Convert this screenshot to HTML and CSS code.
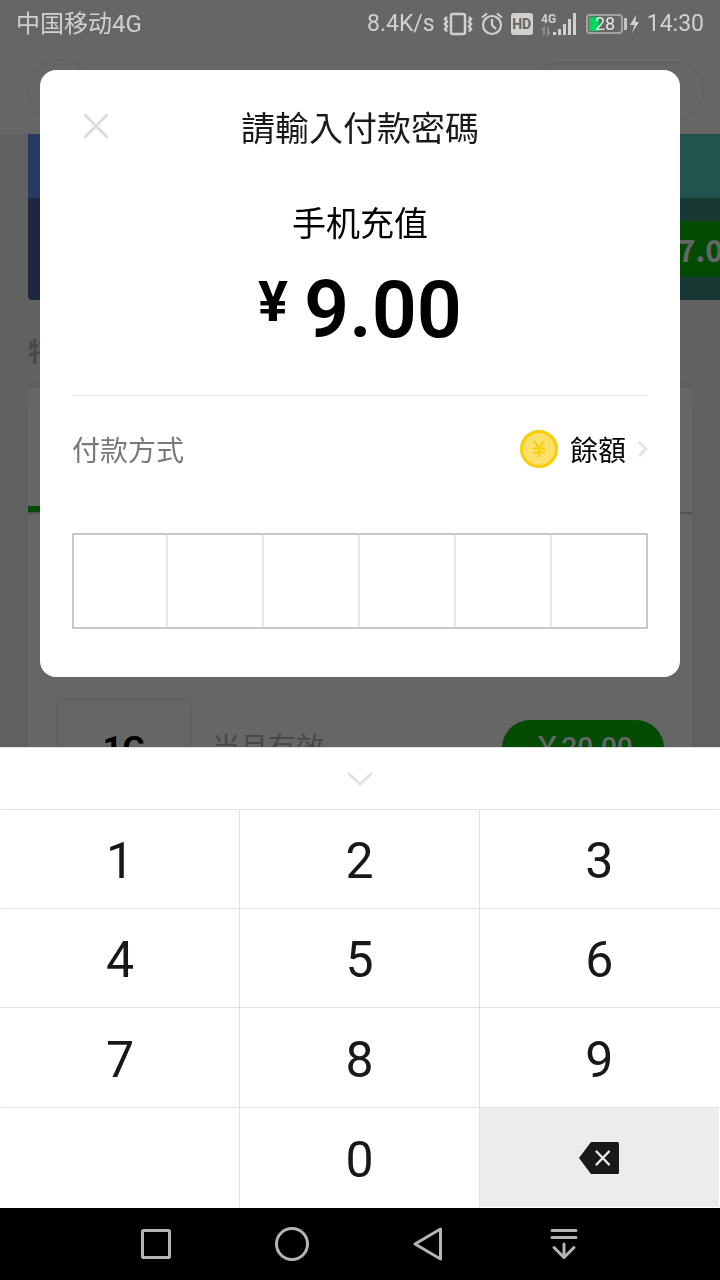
FILE: index.html
```html
<!DOCTYPE html>
<html lang="zh-Hant">
<head>
  <meta charset="UTF-8">
  <title>請輸入付款密碼</title>
  <meta name="viewport" content="width=device-width, initial-scale=1.0">
  <link rel="stylesheet" href="styles.css">
</head>
<body>
  <!-- Shop page under the mask -->
  <div class="shop">
    <div class="shop-header">
      <div class="shop-avatar"></div>
      <div class="shop-menu"></div>
    </div>
    <div class="shop-banners">
      <div class="banner banner-blue"></div>
      <div class="banner banner-teal">
        <div class="banner-price">¥7.00</div>
      </div>
    </div>
    <h2 class="shop-title">特價</h2>
    <div class="shop-card">
      <div class="shop-tabs"><div class="shop-tab"></div></div>
      <div class="shop-item">
        <div class="shop-size">1G</div>
        <div class="shop-desc">当月有效</div>
        <div class="shop-buy">￥20.00</div>
      </div>
    </div>
  </div>

  <div class="mask">
    <!-- Status bar -->
    <div class="status">
      <span class="status-carrier">中国移动4G</span>
      <span>8.4K/s</span>
      <svg width="30" height="24" viewBox="0 0 30 24" fill="none" stroke="#d0d0d0">
        <rect x="8" y="2" width="14" height="20" rx="2" stroke-width="2.5"/>
        <path d="M4 5 2 7 4 9.500 2 12 4 14.500 2 17 4 19.500M26 5 28 7 26 9.500 28 12 26 14.500 28 17 26 19.500" stroke-width="2.5"/>
      </svg>
      <svg width="22" height="24" viewBox="0 0 22 24" fill="none" stroke="#d0d0d0" stroke-width="2.2">
        <circle cx="11" cy="13" r="9"/>
        <path d="M11 7V13L15 17M1 5.500 6 1.500M21 5.500 16 1.500"/>
      </svg>
      <span class="status-hd">HD</span>
      <svg width="36" height="24" viewBox="0 0 36 24" fill="#d0d0d0">
        <text x="0" y="11" class="status-net">4G</text>
        <path d="M12 20h3v3h-3zM17 17h3v6h-3zM22 12h3v11h-3zM27 7h3v16h-3zM32 1h3v22h-3z"/>
        <path d="M3 23V16L1 18M7 15V22L9 20" fill="none" stroke="#8c8c8c" stroke-width="2"/>
      </svg>
      <svg width="54" height="24" viewBox="0 0 54 24">
        <rect x="2" y="3" width="35" height="18" rx="3" fill="none" stroke="#a4a4a4" stroke-width="2"/>
        <path d="M4 5H14V19H4Z" fill="#00d75a"/>
        <path d="M39 6h3v12h-3z" fill="#c4c4c4"/>
        <text x="20" y="18" text-anchor="middle" class="status-level">28</text>
        <path d="M51 3 45 13H49.500L47 21 54 10H50.500Z" fill="#d0d0d0"/>
      </svg>
      <span>14:30</span>
    </div>

    <!-- Payment dialog -->
    <form class="pay">
      <div class="pay-header">
        <button type="button" class="pay-close" aria-label="關閉">
          <svg width="26" height="26" viewBox="0 0 26 26" fill="none" stroke="#dcdcdc" stroke-width="3"><path d="M1.500 1.500 24.500 24.500M24.500 1.500 1.500 24.500"/></svg>
        </button>
        <h1 class="pay-title">請輸入付款密碼</h1>
      </div>
      <div class="pay-name">手机充值</div>
      <div class="pay-amount"><span class="pay-sign">¥</span>9.00</div>
      <div class="pay-method">
        <span class="pay-method-label">付款方式</span>
        <button type="button" class="pay-method-btn">
          <svg width="38" height="38" viewBox="0 0 38 38">
            <circle cx="19" cy="19" r="17.500" fill="#fbe06b" stroke="#facd05" stroke-width="3"/>
            <path d="M14 11 19 18.500 24 11M19 18V27M13 18.500H25M13 22.500H25" fill="none" stroke="#facd05" stroke-width="2"/>
          </svg>
          <span>餘額</span>
          <svg width="10" height="16" viewBox="0 0 10 16" fill="none" stroke="#e4e4e4" stroke-width="3"><path d="M1 1 8 8 1 15"/></svg>
        </button>
      </div>
      <div class="pay-code">
        <input type="password" maxlength="1" inputmode="none" aria-label="密碼第 1 位">
        <input type="password" maxlength="1" inputmode="none" aria-label="密碼第 2 位">
        <input type="password" maxlength="1" inputmode="none" aria-label="密碼第 3 位">
        <input type="password" maxlength="1" inputmode="none" aria-label="密碼第 4 位">
        <input type="password" maxlength="1" inputmode="none" aria-label="密碼第 5 位">
        <input type="password" maxlength="1" inputmode="none" aria-label="密碼第 6 位">
      </div>
    </form>

    <!-- Number pad -->
    <div class="pad">
      <button type="button" class="pad-hide" aria-label="收起鍵盤">
        <svg width="28" height="16" viewBox="0 0 28 16" fill="none" stroke="#e2e2e2" stroke-width="3"><path d="M2 2 14 13 26 2"/></svg>
      </button>
      <div class="pad-keys">
        <button type="button" class="key">1</button>
        <button type="button" class="key">2</button>
        <button type="button" class="key">3</button>
        <button type="button" class="key">4</button>
        <button type="button" class="key">5</button>
        <button type="button" class="key">6</button>
        <button type="button" class="key">7</button>
        <button type="button" class="key">8</button>
        <button type="button" class="key">9</button>
        <div class="key"></div>
        <button type="button" class="key">0</button>
        <button type="button" class="key key-delete" aria-label="刪除">
          <svg width="40" height="32" viewBox="0 0 40 32"><path d="M12 0H38.500Q40 0 40 1.500V30.500Q40 32 38.500 32H12L0 16Z" fill="#181818"/><path d="M17.500 9.500 30 22.500M30 9.500 17.500 22.500" stroke="#ececec" stroke-width="2.400" stroke-linecap="round"/></svg>
        </button>
      </div>
    </div>

    <!-- System navigation -->
    <nav class="nav">
      <button type="button" aria-label="最近">
        <svg width="32" height="34" viewBox="0 0 32 34"><rect x="2.500" y="3.500" width="27" height="27" rx="1"/></svg>
      </button>
      <button type="button" aria-label="主頁">
        <svg width="34" height="34" viewBox="0 0 34 34"><circle cx="17" cy="17" r="15.500"/></svg>
      </button>
      <button type="button" aria-label="返回">
        <svg width="32" height="34" viewBox="0 0 32 34"><path d="M28.500 2V32L3 17Z"/></svg>
      </button>
      <button type="button" aria-label="通知">
        <svg width="32" height="34" viewBox="0 0 32 34"><path d="M4 3.500H28M4 10.500H28M16 17V30M6 20.500 16 30.500 26 20.500"/></svg>
      </button>
    </nav>
  </div>
</body>
</html>
```

FILE: styles.css
```css
* { box-sizing: border-box; }
body {
  margin: 0;
  background: #f2f2f2;
  font-family: Roboto, "Noto Sans CJK SC", sans-serif;
  color: #000;
}
button {
  padding: 0;
  border: 0;
  background: none;
  font: inherit;
  color: inherit;
  cursor: pointer;
}
svg { display: block; flex: none; }
h1, h2 { margin: 0; }

/* shop page */
.shop {
  height: 100vh;
  overflow: hidden;
}
.shop-header {
  display: flex;
  align-items: center;
  justify-content: space-between;
  height: 134px;
  padding: 48px 16px 0 28px;
  background: #fff;
}
.shop-avatar, .shop-menu {
  width: 64px;
  height: 64px;
  border: 1px solid #ebebeb;
  border-radius: 32px;
}
.shop-menu {
  width: 174px;
  height: 58px;
}
.shop-banners {
  display: flex;
  gap: 16px;
  height: 166px;
  padding-left: 28px;
}
.banner {
  flex: 1;
  border-radius: 0 0 4px 4px;
}
.banner-blue { background: linear-gradient(#6491f7 64px, #4664a8 64px); }
.banner-teal {
  display: flex;
  justify-content: flex-end;
  padding-top: 87px;
  border-radius: 0;
  background: linear-gradient(#55cfbe 64px, #3c8c80 64px);
}
.banner-price {
  width: 80px;
  height: 56px;
  padding-left: 20px;
  overflow: hidden;
  background: #09bb07;
  color: #fff;
  font-family: "Noto Sans CJK SC", sans-serif;
  font-size: 30px;
  font-weight: 700;
  line-height: 56px;
}
.shop-title {
  padding: 34px 28px 18px;
  color: #b2b6b6;
  font-size: 26px;
  line-height: 36px;
}
.shop-card {
  height: 100%;
  margin: 0 28px;
  border-radius: 8px 8px 0 0;
  background: #fff;
  box-shadow: 0 0 12px rgba(0,0,0,0.04);
}
.shop-tabs {
  display: flex;
  align-items: flex-end;
  height: 126px;
  border-bottom: 2px solid #c8d2d2;
}
.shop-tab {
  width: 33%;
  height: 6px;
  background: #09bb07;
}
.shop-item {
  display: flex;
  align-items: flex-start;
  padding: 184px 28px 0;
}
.shop-size {
  width: 136px;
  height: 96px;
  margin-right: 20px;
  border: 2px solid #f1f1f1;
  border-radius: 8px;
  font-size: 34px;
  font-weight: 700;
  line-height: 96px;
  text-align: center;
}
.shop-desc {
  flex: 1;
  color: #b4b4b4;
  font-size: 28px;
  line-height: 102px;
}
.shop-buy {
  width: 162px;
  margin-top: 22px;
  border-radius: 28px;
  background: #09bb07;
  color: #fff;
  font-size: 28px;
  font-weight: 500;
  line-height: 56px;
  text-align: center;
}

/* mask */
.mask {
  position: fixed;
  inset: 0;
  display: flex;
  flex-direction: column;
  overflow-y: auto;
  background: rgba(0,0,0,0.6);
}

.status {
  display: flex;
  flex: none;
  align-items: center;
  gap: 8px;
  height: 48px;
  padding: 0 16px;
  color: #d0d0d0;
  font-size: 23px;
  line-height: 52px;
}
.status svg { overflow: visible; }
.status-carrier {
  flex: 1;
  font-size: 24px;
}
.status-hd {
  width: 22px;
  border-radius: 3px;
  background: #d0d0d0;
  color: #666;
  font-size: 14px;
  font-weight: 700;
  line-height: 22px;
  text-align: center;
}
.status-net {
  font-size: 12px;
  font-weight: 700;
}
.status-level {
  fill: #e4e4e4;
  font-size: 18px;
}

/* dialog */
.pay {
  flex: none;
  margin: 22px 40px;
  padding: 0 32px 48px;
  border-radius: 16px;
  background: #fff;
}
.pay-header {
  display: grid;
  grid-template-columns: 48px 1fr 48px;
  align-items: center;
  height: 112px;
}
.pay-close {
  display: flex;
  justify-content: center;
}
.pay-title {
  color: #1a1a1a;
  font-family: Roboto, "Noto Sans CJK TC", sans-serif;
  font-size: 34px;
  font-weight: 400;
  text-align: center;
}
.pay-name {
  margin-top: 18px;
  font-size: 34px;
  line-height: 48px;
  text-align: center;
}
.pay-amount {
  display: flex;
  justify-content: center;
  gap: 16px;
  padding: 6px 0 29px;
  border-bottom: 1px solid #e2e2e2;
  font-size: 79px;
  font-weight: 600;
  line-height: 112px;
}
.pay-sign {
  font-size: 56px;
  font-weight: 700;
  line-height: 96px;
}
.pay-method {
  display: flex;
  align-items: center;
  justify-content: space-between;
  height: 106px;
  font-family: Roboto, "Noto Sans CJK TC", sans-serif;
  font-size: 28px;
}
.pay-method-label { color: #777a77; }
.pay-method-btn {
  display: flex;
  align-items: center;
  gap: 12px;
}
/* the frame is drawn over the cells so all six stay equal */
.pay-code {
  display: grid;
  grid-template-columns: repeat(6, 1fr);
  height: 96px;
  margin-top: 31px;
  outline: 2px solid #c8c8c8;
  outline-offset: -2px;
}
.pay-code input {
  width: 100%;
  min-width: 0;
  padding: 0;
  border: 0;
  border-right: 2px solid #e8e8e8;
  border-radius: 0;
  background: none;
  font-size: 48px;
  text-align: center;
  outline: none;
}
.pay-code input:last-child { border-right: 0; }

/* number pad */
.pad {
  flex: none;
  margin-top: auto;
  border-top: 1px solid #e2e2e2;
  background: #fff;
}
.pad-hide {
  display: flex;
  align-items: center;
  justify-content: center;
  width: 100%;
  height: 61px;
}
.pad-keys {
  display: grid;
  grid-template-columns: repeat(3, 1fr);
  grid-template-rows: 99px 99px 100px 100px;
  padding: 0 1px 1px;
}
.key {
  display: flex;
  align-items: center;
  justify-content: center;
  padding-top: 4px;
  border-top: 1px solid #e2e2e2;
  border-right: 1px solid #e2e2e2;
  color: #181818;
  font-size: 50px;
}
.key:nth-child(3n) { border-right: 0; }
.key-delete {
  padding-top: 0;
  background: #ececec;
}

/* system bar */
.nav {
  display: flex;
  flex: none;
  align-items: center;
  justify-content: center;
  gap: 104px;
  height: 72px;
  background: #000;
}
.nav button {
  display: flex;
  justify-content: center;
  width: 32px;
}
.nav svg {
  fill: none;
  stroke: #b4b4b4;
  stroke-width: 3;
  stroke-linecap: round;
  stroke-linejoin: round;
}
```
